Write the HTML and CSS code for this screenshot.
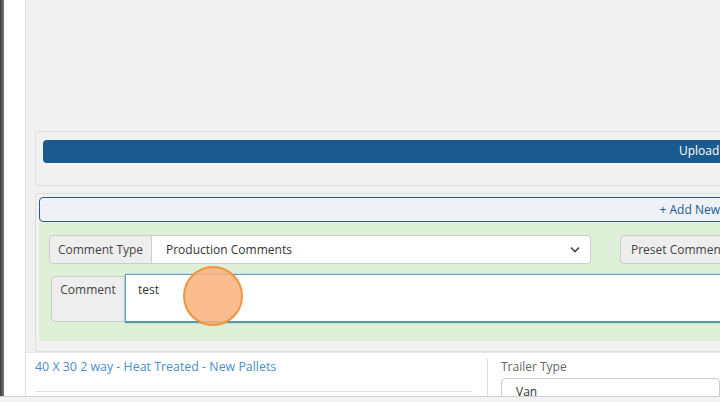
FILE: index.html
```html
<!DOCTYPE html>
<html lang="en">
<head>
    <meta charset="UTF-8">
    <meta name="viewport" content="width=device-width, initial-scale=1.0">
    <title>Order Comments</title>
    <link rel="stylesheet" href="styles.css">
</head>
<body>
    <div class="app">
        <div class="edge"></div>
        <div class="gutter"></div>
        <div class="main">
            <div class="well-space"></div>
            <div class="panel upload-panel">
                <button class="btn-upload">Upload Document</button>
            </div>
            <div class="panel comment-panel">
                <button class="btn-add">+ Add New Comment</button>
                <div class="comment-form">
                    <div class="form-row">
                        <span class="addon addon-type">Comment Type</span>
                        <div class="select-box">
                            <span>Production Comments</span>
                            <svg class="chevron" width="10" height="7" viewBox="0 0 10 7"><path d="M1 1.5 L5 5.5 L9 1.5" fill="none" stroke="#444" stroke-width="1.6"/></svg>
                        </div>
                        <button class="btn-preset">Preset Comment</button>
                    </div>
                    <div class="form-row">
                        <span class="addon addon-comment">Comment</span>
                        <div class="textarea">test</div>
                    </div>
                </div>
            </div>
            <div class="details">
                <div class="col-left">
                    <a class="item-link" href="#">40 X 30 2 way - Heat Treated - New Pallets</a>
                    <div class="rule"></div>
                </div>
                <div class="col-right">
                    <div class="field-label">Trailer Type</div>
                    <div class="field-select">Van</div>
                </div>
            </div>
            <div class="click-mark"></div>
        </div>
    </div>
    <div class="statusbar"></div>
</body>
</html>
```
FILE: styles.css
```css
body {
    margin: 0;
    font-family: "Open Sans", Arial, sans-serif;
    font-size: 12px;
    color: #333;
    background: #fff;
    overflow: hidden;
}
.app {
    display: flex;
    height: 396px;
}
.edge {
    width: 4px;
    background: linear-gradient(to right, #3c3c3c, #7a7a7a);
}
.gutter {
    width: 21px;
    background: #fff;
    border-right: 1px solid #dcdcdc;
}
.main {
    flex: 1;
    position: relative;
    overflow: hidden;
    background: #f1f1f1;
    padding-left: 9px;
}
.well-space {
    height: 131px;
}
.panel {
    width: 1400px;
    border: 1px solid #dedede;
    border-radius: 2px;
}
.upload-panel {
    height: 45px;
    padding: 8px 0 0 7px;
}
.btn-upload {
    display: block;
    width: 1374px;
    height: 23px;
    padding: 0 0 2px;
    border: none;
    border-radius: 4px;
    background: #1b5a8e;
    color: #fff;
    font-family: inherit;
    font-size: 12px;
}
.comment-panel {
    margin-top: 7px;
    padding: 3px 3px 10px 3px;
}
.btn-add {
    display: block;
    width: 1360px;
    height: 25px;
    border: 1px solid #2b5a84;
    border-radius: 4px;
    background: #eef2f6;
    color: #1b5a8e;
    font-family: inherit;
    font-size: 12px;
}
.comment-form {
    margin-top: 1px;
    background: #dff0d8;
    padding: 12px 0 18px 10px;
}
.form-row {
    display: flex;
}
.form-row + .form-row {
    margin-top: 10px;
}
.addon {
    display: flex;
    box-sizing: border-box;
    background: #eee;
    border: 1px solid #ccc;
    border-radius: 4px 0 0 4px;
    color: #444;
}
.addon-type {
    width: 103px;
    height: 29px;
    align-items: center;
    justify-content: center;
}
.addon-comment {
    width: 74px;
    height: 46px;
    margin: 2px 0 0 2px;
    justify-content: center;
    padding-top: 4px;
}
.select-box {
    box-sizing: border-box;
    width: 439px;
    height: 29px;
    display: flex;
    align-items: center;
    justify-content: space-between;
    padding: 0 10px 0 14px;
    background: #fff;
    border: 1px solid #ccc;
    border-left: none;
    border-radius: 0 4px 4px 0;
    color: #333;
}
.btn-preset {
    margin-left: 29px;
    height: 29px;
    padding: 0 10px;
    background: #eee;
    border: 1px solid #ccc;
    border-radius: 4px;
    color: #444;
    font-family: inherit;
    font-size: 12px;
}
.textarea {
    box-sizing: border-box;
    width: 1200px;
    height: 49px;
    padding: 6px 12px;
    background: #fff;
    border: 1px solid #5b9fc4;
    border-bottom: 2px solid #5b93ad;
    box-shadow: 0 0 2px rgba(102, 175, 233, 0.6);
    color: #333;
}
.details {
    display: flex;
    height: 43px;
    margin-left: -9px;
    background: #fff;
    border-top: 1px solid #e4e4e4;
}
.col-left {
    width: 452px;
    padding: 5px 0 0 9px;
}
.item-link {
    display: block;
    color: #4a8ecb;
    text-decoration: none;
    line-height: 17px;
    font-size: 12.4px;
}
.rule {
    width: 437px;
    margin-top: 16px;
    border-top: 1px solid #dedede;
}
.col-right {
    margin-top: 6px;
    padding-left: 13px;
    border-left: 1px solid #dedede;
    flex: 1;
}
.field-label {
    color: #666;
    line-height: 17px;
    margin-top: -1px;
}
.field-select {
    margin-top: 3px;
    height: 30px;
    box-sizing: border-box;
    border: 1px solid #ccc;
    border-radius: 4px;
    padding: 4px 14px;
    color: #333;
}
.click-mark {
    position: absolute;
    left: 157px;
    top: 266px;
    width: 56px;
    height: 56px;
    border-radius: 50%;
    background: rgba(250, 178, 124, 0.85);
    border: 2px solid #f0943c;
}
.statusbar {
    height: 5px;
    border-top: 1px solid #cfcfcf;
    background: #f3f3f3;
}
```
